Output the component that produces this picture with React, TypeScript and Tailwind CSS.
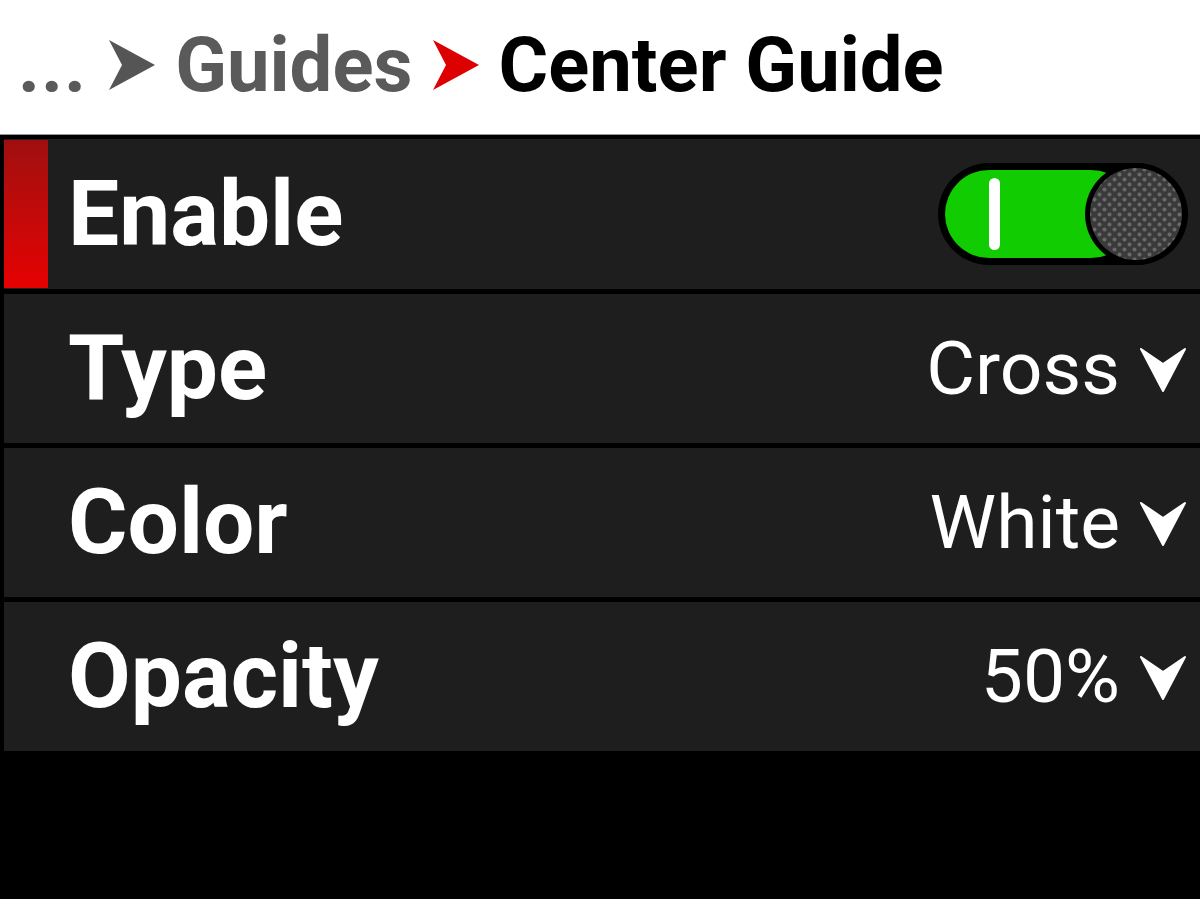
import React from "react";

const font = { fontFamily: "Roboto, 'Liberation Sans', sans-serif" };

function Crumb({ className }: { className: string }) {
	return (
		<svg width="46" height="50" viewBox="0 0 46 50" className={className}>
			<polygon points="0,0 46,25 0,50 13,25" fill="currentColor" />
		</svg>
	);
}

function Caret() {
	return (
		<svg width="46" height="46" viewBox="0 0 46 46" className="text-white">
			<polygon points="1,3 23,18 45,3 23,45" fill="currentColor" stroke="currentColor" strokeWidth="2" strokeLinejoin="round" />
		</svg>
	);
}

function Toggle() {
	return (
		<svg width="252" height="104" viewBox="0 0 252 104">
			<defs>
				<pattern id="dots" width="10" height="10" patternUnits="userSpaceOnUse">
					<rect width="10" height="10" fill="#3a3a3a" />
					<circle cx="2.5" cy="2.5" r="2" fill="#6a6a6a" />
					<circle cx="7.5" cy="7.5" r="2" fill="#6a6a6a" />
				</pattern>
			</defs>
			<rect x="1" y="1" width="250" height="102" rx="51" fill="#000" />
			<rect x="8" y="8" width="190" height="88" rx="44" fill="#10cc00" />
			<rect x="52" y="16" width="11" height="72" rx="5.5" fill="#fff" />
			<circle cx="199" cy="52" r="51" fill="#000" />
			<circle cx="199" cy="52" r="46" fill="url(#dots)" />
		</svg>
	);
}

const rows = [
	{ label: "Type", value: "Cross" },
	{ label: "Color", value: "White" },
	{ label: "Opacity", value: "50%" },
];

export default function App() {
	return (
		<div className="w-[1200px] h-[899px] bg-black flex flex-col overflow-hidden" style={font}>
			<div className="h-[135px] bg-white border-b border-[#9a9a9a] flex items-center pl-[18px] pb-[4px] shrink-0">
				<span className="text-[76px] font-bold text-[#5a5a5a] leading-none tracking-[1px]">...</span>
				<Crumb className="text-[#555555] ml-[22px]" />
				<span className="text-[76px] font-bold text-[#5a5a5a] leading-none ml-[20px]">Guides</span>
				<Crumb className="text-[#dd0000] ml-[20px]" />
				<span className="text-[76px] font-bold text-black leading-none ml-[20px]">Center Guide</span>
			</div>
			<div className="flex flex-col gap-[5px] pt-[4px] pl-[4px]">
				<div className="h-[150px] bg-[#1e1e1e] flex items-center">
					<div className="w-[44px] self-stretch my-[1px] bg-gradient-to-b from-[#a00e0e] to-[#e60000]" />
					<span className="ml-[20px] text-[91px] font-bold text-white leading-none">Enable</span>
					<div className="ml-auto mr-[11px] flex">
						<Toggle />
					</div>
				</div>
				{rows.map((r) => (
					<div key={r.label} className="h-[149px] bg-[#1e1e1e] flex items-center">
						<span className="ml-[64px] text-[91px] font-bold text-white leading-none">{r.label}</span>
						<div className="ml-auto mr-[14px] flex items-center gap-[20px]">
							<span className="text-[75px] text-white leading-none">{r.value}</span>
							<Caret />
						</div>
					</div>
				))}
			</div>
		</div>
	);
}
